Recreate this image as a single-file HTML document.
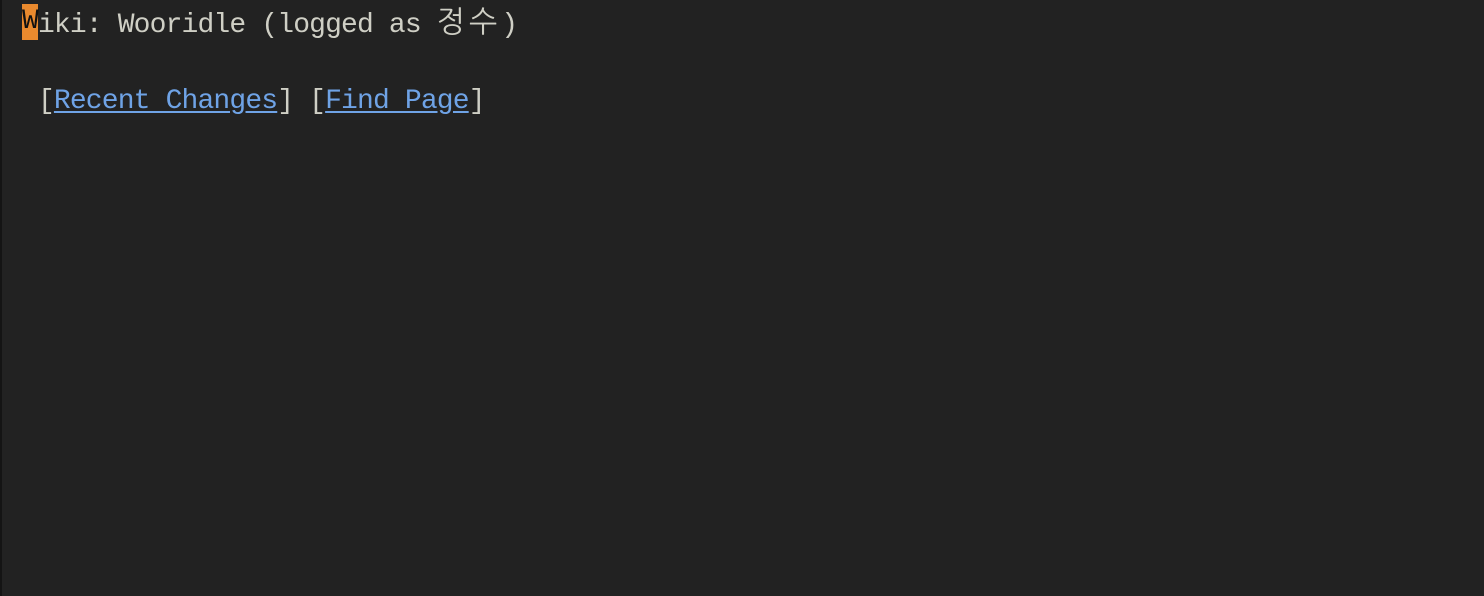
<!DOCTYPE html>
<html><head><style>
html,body{margin:0;padding:0;width:1484px;height:596px;background:#222222;overflow:hidden}
body{border-left:2px solid #141414;box-sizing:border-box;font-family:"Liberation Mono","NanumGothic",monospace;font-size:28px;letter-spacing:-0.85px;color:#cfcfc5;position:relative}
.l{position:absolute;left:20px;white-space:pre;line-height:36px}
.c{background:#ea8a2e;color:#111;display:inline-block;height:36px;vertical-align:top}
.k{font-family:"NanumGothic","Noto Sans CJK KR",sans-serif;font-size:30px;letter-spacing:4px}
a{color:#6fa3e6;text-decoration:underline;text-underline-offset:3px}
</style></head><body>
<div class="l" style="top:4px"><span class="c">W</span>iki: Wooridle (logged as <span class="k">정수</span>)</div>
<div class="l" style="top:84px"> [<a>Recent Changes</a>] [<a>Find Page</a>]</div>
</body></html>
